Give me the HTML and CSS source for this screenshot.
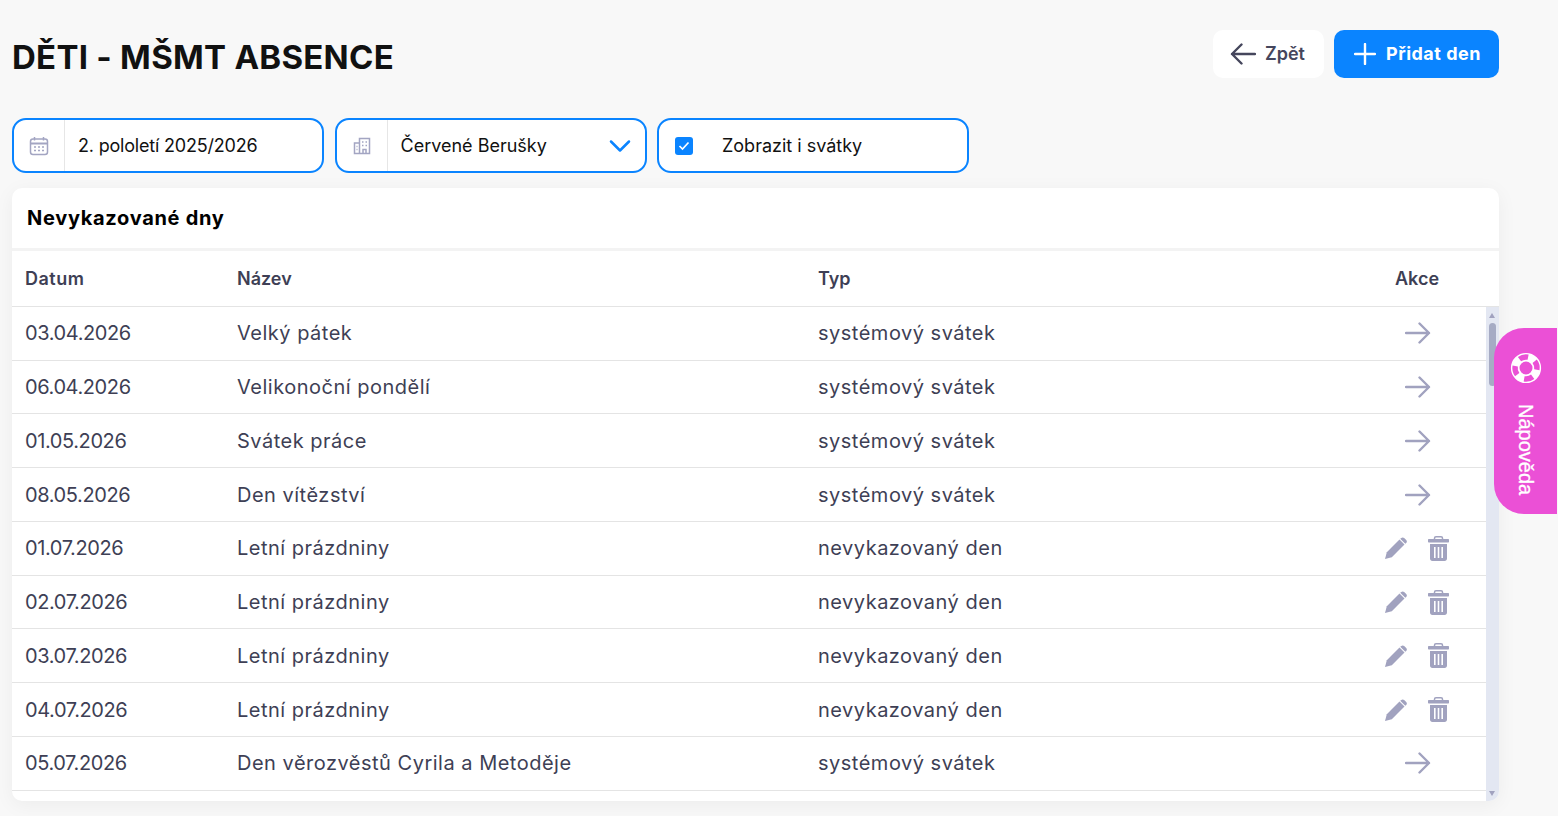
FILE: index.html
```html
<!DOCTYPE html>
<html lang="cs">
<head>
    <meta charset="utf-8">
    <title>Děti - MŠMT absence</title>
    <link rel="stylesheet" href="styles.css">
</head>
<body>
    <svg class="icon-defs" width="0" height="0">
        <symbol id="i-arrow" viewBox="0 0 26 22">
            <path d="M1 11h23M14.500 1.500L24 11l-9.500 9.500" fill="none" stroke="currentColor" stroke-width="2.400" stroke-linecap="round" stroke-linejoin="round"/>
        </symbol>
        <symbol id="i-pen" viewBox="0 0 22 22">
            <path d="M0 22l1.800-6.800L14.500 2.500l5 5L6.800 20.200z" fill="currentColor"/>
            <path d="M16 1.200c1-1 2.300-1 3.200-.2l2 2c.9.900.9 2.200 0 3.100L20.300 6.800l-5.100-5z" fill="currentColor"/>
        </symbol>
        <symbol id="i-bin" viewBox="0 0 21 25">
            <path d="M6.500 3.500V2.200C6.500 1.300 7.200.8 8 .8h5c.8 0 1.500.5 1.500 1.400v1.300" fill="none" stroke="currentColor" stroke-width="1.500"/>
            <path d="M1 3h19c.6 0 1 .4 1 1v1.800c0 .4-.3.700-.7.700H.7c-.4 0-.7-.3-.7-.7V4c0-.6.400-1 1-1z" fill="currentColor"/>
            <path fill-rule="evenodd" d="M2 8h17v14.500c0 1.400-1 2.500-2.400 2.500H4.400C3 25 2 23.900 2 22.500zM6 11v11h1.600V11zM9.700 11v11h1.600V11zM13.400 11v11H15V11z" fill="currentColor"/>
        </symbol>
    </svg>

    <header class="page-head">
        <h1>DĚTI - MŠMT ABSENCE</h1>
        <div class="head-actions">
            <button class="btn btn-back">
                <svg class="btn-icon" viewBox="0 0 26 22"><path d="M25 11H2M11.500 1.500L2 11l9.500 9.500" fill="none" stroke="currentColor" stroke-width="2.400" stroke-linecap="round" stroke-linejoin="round"/></svg>
                <span class="btn-text">Zpět</span>
            </button>
            <button class="btn btn-add">
                <svg class="btn-icon" viewBox="0 0 22 22"><path d="M11 1v20M1 11h20" fill="none" stroke="currentColor" stroke-width="2.400" stroke-linecap="round"/></svg>
                <span class="btn-text">Přidat den</span>
            </button>
        </div>
    </header>

    <div class="filters">
        <div class="filter">
            <span class="filter-addon">
                <svg width="20" height="20" viewBox="0 0 20 20" fill="none" stroke="#a3a5c2" stroke-width="1.500">
                    <rect x="1.500" y="3" width="17" height="15.500" rx="2.500"/>
                    <path d="M1.500 7.500h17" stroke-width="2"/>
                    <path d="M5.500 1v3.500M14.500 1v3.500"/>
                    <path d="M5 11h2M9 11h2M13 11h2M5 14.500h2M9 14.500h2M13 14.500h2" stroke-width="1.600"/>
                </svg>
            </span>
            <span class="filter-value filter-term">2. pololetí 2025/2026</span>
        </div>
        <div class="filter">
            <span class="filter-addon">
                <svg width="18" height="18" viewBox="0 0 18 18" fill="none" stroke="#a3a5c2" stroke-width="1.500">
                    <path d="M6.500 1.500h10v15h-10zM1.500 6h5v10.500h-5z"/>
                    <path d="M9 5h1.500M12.500 5H14M9 8.500h1.500M12.500 8.500H14M3.500 9.500h1M3.500 12.500h1"/>
                    <path d="M10 16.500v-4h3v4"/>
                </svg>
            </span>
            <span class="filter-value">Červené Berušky</span>
            <svg class="chevron" width="22" height="14" viewBox="0 0 22 14"><path d="M2 2.500l9 9 9-9" fill="none" stroke="#0a84ff" stroke-width="2.500" stroke-linecap="round" stroke-linejoin="round"/></svg>
        </div>
        <label class="filter filter-check">
            <span class="checkbox">
                <svg width="12" height="10" viewBox="0 0 12 10"><path d="M1.500 5l3 3 6-6.500" fill="none" stroke="#fff" stroke-width="1.700"/></svg>
            </span>
            <span class="filter-value">Zobrazit i svátky</span>
        </label>
    </div>

    <section class="card">
        <h2 class="card-title">Nevykazované dny</h2>
        <div class="table-head row">
            <div>Datum</div>
            <div>Název</div>
            <div>Typ</div>
            <div class="cell-action">Akce</div>
        </div>
        <div class="table-wrap">
            <div class="table-body">
                <div class="row">
                    <div>03.04.2026</div><div>Velký pátek</div><div>systémový svátek</div>
                    <div class="cell-action"><svg class="ic-arrow"><use href="#i-arrow"/></svg></div>
                </div>
                <div class="row">
                    <div>06.04.2026</div><div>Velikonoční pondělí</div><div>systémový svátek</div>
                    <div class="cell-action"><svg class="ic-arrow"><use href="#i-arrow"/></svg></div>
                </div>
                <div class="row">
                    <div>01.05.2026</div><div>Svátek práce</div><div>systémový svátek</div>
                    <div class="cell-action"><svg class="ic-arrow"><use href="#i-arrow"/></svg></div>
                </div>
                <div class="row">
                    <div>08.05.2026</div><div>Den vítězství</div><div>systémový svátek</div>
                    <div class="cell-action"><svg class="ic-arrow"><use href="#i-arrow"/></svg></div>
                </div>
                <div class="row">
                    <div>01.07.2026</div><div>Letní prázdniny</div><div>nevykazovaný den</div>
                    <div class="cell-action"><svg class="ic-pen"><use href="#i-pen"/></svg><svg class="ic-bin"><use href="#i-bin"/></svg></div>
                </div>
                <div class="row">
                    <div>02.07.2026</div><div>Letní prázdniny</div><div>nevykazovaný den</div>
                    <div class="cell-action"><svg class="ic-pen"><use href="#i-pen"/></svg><svg class="ic-bin"><use href="#i-bin"/></svg></div>
                </div>
                <div class="row">
                    <div>03.07.2026</div><div>Letní prázdniny</div><div>nevykazovaný den</div>
                    <div class="cell-action"><svg class="ic-pen"><use href="#i-pen"/></svg><svg class="ic-bin"><use href="#i-bin"/></svg></div>
                </div>
                <div class="row">
                    <div>04.07.2026</div><div>Letní prázdniny</div><div>nevykazovaný den</div>
                    <div class="cell-action"><svg class="ic-pen"><use href="#i-pen"/></svg><svg class="ic-bin"><use href="#i-bin"/></svg></div>
                </div>
                <div class="row">
                    <div>05.07.2026</div><div>Den věrozvěstů Cyrila a Metoděje</div><div>systémový svátek</div>
                    <div class="cell-action"><svg class="ic-arrow"><use href="#i-arrow"/></svg></div>
                </div>
            </div>
            <div class="scrollbar">
                <span class="scroll-up"></span>
                <span class="scroll-thumb"></span>
                <span class="scroll-down"></span>
            </div>
        </div>
    </section>

    <!-- Help tab fixed on the right edge -->
    <a class="help-tab">
        <svg width="32" height="32" viewBox="0 0 32 32" fill="none">
            <circle cx="16" cy="16" r="10.800" stroke="#fff" stroke-width="8.600"/>
            <g transform="rotate(-38 16 16)">
                <circle cx="16" cy="16" r="11" stroke="#eb50d6" stroke-width="5.400" stroke-dasharray="9 8.280"/>
            </g>
        </svg>
        <span class="help-label">Nápověda</span>
    </a>
</body>
</html>
```

FILE: styles.css
```css
/* Basic page styling */
html, body {
    height: 100%;
}

body {
    margin: 0;
    padding: 30px 59px 15px 12px;
    box-sizing: border-box;
    display: flex;
    flex-direction: column;
    overflow: hidden;
    background-color: #f8f8f8;
    font-family: Inter, "Open Sans", sans-serif;
    color: #3e3f55;
}

.icon-defs {
    position: absolute;
}

/* Page header */
.page-head {
    display: flex;
    justify-content: space-between;
    height: 48px;
    margin-bottom: 40px;
}

h1 {
    margin: 6px 0 0;
    font-size: 33px;
    line-height: 42px;
    font-weight: 700;
    letter-spacing: 0.27px;
    color: #111;
}

.head-actions {
    display: flex;
    gap: 10px;
}

.btn {
    display: flex;
    align-items: center;
    height: 48px;
    border: 0;
    border-radius: 10px;
    font-family: inherit;
    font-size: 18px;
    font-weight: 600;
}

.btn-text {
    margin-top: -2px;
}

.btn-back {
    width: 111px;
    padding: 0 0 0 17px;
    gap: 9px;
    background: #fff;
    color: #45465c;
}

.btn-back .btn-icon {
    width: 26px;
    height: 22px;
}

.btn-add {
    width: 165px;
    padding: 0 0 0 20px;
    gap: 10px;
    background: #0a84ff;
    color: #fff;
    font-weight: 700;
    letter-spacing: 0.5px;
}

.btn-add .btn-icon {
    width: 22px;
    height: 22px;
}

/* Filter row */
.filters {
    display: flex;
    gap: 10.5px;
    margin-bottom: 15px;
}

.filter {
    display: flex;
    align-items: center;
    box-sizing: border-box;
    width: 312px;
    height: 55px;
    border: 2px solid #0a84ff;
    border-radius: 14px;
    background: #fff;
    color: #111;
    font-size: 18px;
}

.filter-addon {
    display: flex;
    align-items: center;
    justify-content: center;
    flex: none;
    width: 50px;
    height: 100%;
    border-right: 1px solid #e6e6e6;
}

.filter-value {
    flex: 1;
    padding-left: 13px;
}

.filter-term {
    letter-spacing: -0.2px;
}

.chevron {
    margin-right: 14px;
}

.filter-check {
    padding-left: 16px;
}

.filter-check .filter-value {
    padding-left: 29px;
}

.checkbox {
    display: flex;
    align-items: center;
    justify-content: center;
    width: 18px;
    height: 18px;
    border-radius: 3px;
    background: #0a84ff;
}

/* Card with the table */
.card {
    flex: 1;
    display: flex;
    flex-direction: column;
    min-height: 0;
    overflow: hidden;
    border-radius: 10px;
    background: #fff;
    box-shadow: 0 4px 20px rgba(0,0,0,0.05);
}

.card-title {
    height: 63px;
    margin: 0;
    padding-left: 15px;
    box-sizing: border-box;
    border-bottom: 3px solid #f3f3f3;
    font-size: 20px;
    line-height: 60px;
    font-weight: 700;
    letter-spacing: 0.7px;
    color: #000;
}

.row {
    display: grid;
    grid-template-columns: 212px 581px 1fr 138px;
    align-items: center;
    height: 53.75px;
    box-sizing: border-box;
    border-bottom: 1px solid #e4e4e4;
    font-size: 20px;
    letter-spacing: 0.5px;
}

.row > div {
    padding-left: 13px;
}

.table-body .row > div:first-child {
    letter-spacing: -0.4px;
}

.table-head {
    flex: none;
    height: 55.9px;
    padding-right: 13px;
    font-size: 18px;
    font-weight: 600;
    letter-spacing: 0;
}

.table-head > div:first-child {
    letter-spacing: 0.5px;
}

.row > .cell-action {
    display: flex;
    align-items: center;
    justify-content: center;
    gap: 21px;
    padding-left: 0;
}

.ic-arrow {
    width: 26px;
    height: 22px;
    margin-left: 1px;
    color: #a1a2bf;
}

.ic-pen {
    width: 22px;
    height: 22px;
    color: #a1a2bf;
}

.ic-bin {
    width: 21px;
    height: 25px;
    color: #a1a2bf;
}

.table-wrap {
    flex: 1;
    display: flex;
    min-height: 0;
}

.table-body {
    flex: 1;
    overflow: hidden;
}

/* Scrollbar on the right of the table */
.scrollbar {
    position: relative;
    flex: none;
    width: 13px;
    background: #e3e7f2;
}

.scroll-up, .scroll-down {
    position: absolute;
    left: 3px;
    width: 0;
    height: 0;
    border-left: 3.5px solid transparent;
    border-right: 3.5px solid transparent;
}

.scroll-up {
    top: 6px;
    border-bottom: 5px solid #a1a2bf;
}

.scroll-down {
    bottom: 5px;
    border-top: 5px solid #a1a2bf;
}

.scroll-thumb {
    position: absolute;
    top: 16px;
    left: 3px;
    width: 7px;
    height: 63px;
    border-radius: 4px;
    background: #a6abc4;
}

/* Help tab */
.help-tab {
    position: fixed;
    top: 328px;
    right: 1px;
    display: flex;
    flex-direction: column;
    align-items: center;
    box-sizing: border-box;
    width: 63px;
    height: 186px;
    padding-top: 24px;
    border-radius: 30px 0 0 30px;
    background: #eb50d6;
    color: #fff;
}

.help-label {
    margin-top: 20px;
    writing-mode: vertical-rl;
    font-family: "Liberation Sans", Arial, sans-serif;
    font-size: 20px;
    -webkit-text-stroke: 0.3px #fff;
}
```
